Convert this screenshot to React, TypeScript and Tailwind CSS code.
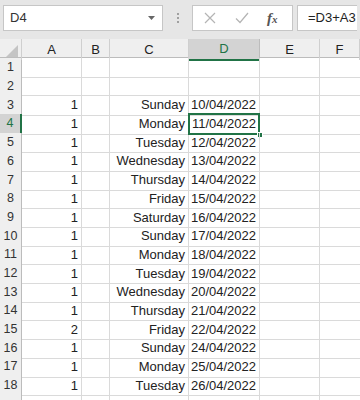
import React from 'react';

const rows: [number, string, string, string][] = [
  [1, '', '', ''],
  [2, '', '', ''],
  [3, '1', 'Sunday', '10/04/2022'],
  [4, '1', 'Monday', '11/04/2022'],
  [5, '1', 'Tuesday', '12/04/2022'],
  [6, '1', 'Wednesday', '13/04/2022'],
  [7, '1', 'Thursday', '14/04/2022'],
  [8, '1', 'Friday', '15/04/2022'],
  [9, '1', 'Saturday', '16/04/2022'],
  [10, '1', 'Sunday', '17/04/2022'],
  [11, '1', 'Monday', '18/04/2022'],
  [12, '1', 'Tuesday', '19/04/2022'],
  [13, '1', 'Wednesday', '20/04/2022'],
  [14, '1', 'Thursday', '21/04/2022'],
  [15, '2', 'Friday', '22/04/2022'],
  [16, '1', 'Sunday', '24/04/2022'],
  [17, '1', 'Monday', '25/04/2022'],
  [18, '1', 'Tuesday', '26/04/2022'],
  [19, '', '', ''],
];

const cols = ['A', 'B', 'C', 'D', 'E', 'F'];
const grid = 'grid grid-cols-[22px_60px_28px_79px_71px_60px_1fr]';

export default function App() {
  return (
    <div
      className="w-[360px] h-[400px] overflow-hidden bg-white text-[13px] text-[#222]"
      style={{ fontFamily: '"Liberation Sans", Arial, sans-serif' }}
    >
      {/* Formula bar */}
      <div className="h-[39px] bg-[#e6e6e6] flex items-start pt-[5px] px-[3px]">
        <div className="w-[160px] h-[26px] bg-white border border-[#c6c6c6] flex items-center justify-between pl-[6px] pr-[7px]">
          <span className="text-[13px] text-[#333]">D4</span>
          <svg width="7" height="4" viewBox="0 0 7 4">
            <path d="M0 0h7L3.5 4z" fill="#666" />
          </svg>
        </div>
        <div className="w-[29px] h-[26px] flex flex-col items-center justify-center gap-[2px]">
          <span className="w-[2px] h-[2px] bg-[#a0a0a0]" />
          <span className="w-[2px] h-[2px] bg-[#a0a0a0]" />
          <span className="w-[2px] h-[2px] bg-[#a0a0a0]" />
        </div>
        <div className="w-[101px] h-[26px] bg-white border border-[#c6c6c6] flex items-center pl-[10px]">
          <svg width="12" height="12" viewBox="0 0 12 12" className="ml-[1px]">
            <path d="M1 1l10 10M11 1L1 11" stroke="#b4b4b4" strokeWidth="1.2" />
          </svg>
          <svg width="14" height="12" viewBox="0 0 14 12" className="ml-[19px]">
            <path d="M1 6.5l4 4L13 1" stroke="#b4b4b4" strokeWidth="1.2" fill="none" />
          </svg>
          <span
            className="ml-[18px] italic font-bold text-[15px] text-[#555]"
            style={{ fontFamily: '"Liberation Serif", serif' }}
          >
            f<span className="text-[11px]">x</span>
          </span>
        </div>
        <div className="flex-1 ml-[4px] h-[26px] bg-white border border-[#c6c6c6] border-r-0 flex items-center pl-[10px]">
          <span className="text-[13px] text-[#222]">=D3+A3</span>
        </div>
      </div>

      {/* Column header */}
      <div className={`${grid} h-[19px] bg-[#efefef] border-b border-[#bcbcbc]`}>
        <div className="relative border-r border-[#cfcfcf]">
          <svg width="12" height="12" viewBox="0 0 12 12" className="absolute right-[3px] bottom-[3px]">
            <path d="M12 0V12H0z" fill="#c4c4c4" />
          </svg>
        </div>
        {cols.map((c) =>
          c === 'D' ? (
            <div
              key={c}
              className="flex items-center justify-center bg-[#d3d3d3] border-r border-[#bcbcbc] border-b-2 border-b-[#217346] text-[#217346] -mb-[1px]"
            >
              {c}
            </div>
          ) : (
            <div key={c} className="flex items-center justify-center border-r border-[#cfcfcf] text-[#222]">
              {c}
            </div>
          )
        )}
      </div>

      {/* Rows */}
      {rows.map(([n, a, c, d]) => {
        const sel = n === 4;
        const label = n === 19 ? '' : n;
        return (
          <div key={n} className={`${grid} h-[18.7px]`}>
            <div
              className={
                sel
                  ? 'flex items-center justify-center bg-[#d3d3d3] border-r-2 border-[#217346] border-b border-b-[#bcbcbc] text-[12.5px] text-[#217346]'
                  : 'flex items-center justify-center bg-[#efefef] border-r border-[#bcbcbc] border-b border-b-[#d4d4d4] text-[12.5px] text-[#333]'
              }
            >
              {label}
            </div>
            <div className="flex items-center justify-end pr-[3px] border-r border-b border-[#dadada]">{a}</div>
            <div className="border-r border-b border-[#dadada]" />
            <div className="flex items-center justify-end pr-[3px] border-r border-b border-[#dadada]">{c}</div>
            <div className="relative flex items-center justify-end pr-[3px] border-r border-b border-[#dadada]">
              {d}
              {sel && (
                <>
                  <div className="absolute -left-[1px] -top-[1px] -right-[1px] -bottom-[1px] border-2 border-[#217346]" />
                  <div className="absolute -right-[4px] -bottom-[4px] w-[6px] h-[6px] bg-[#217346] border border-white" />
                </>
              )}
            </div>
            <div className="border-r border-b border-[#dadada]" />
            <div className="border-b border-[#dadada]" />
          </div>
        );
      })}
    </div>
  );
}
